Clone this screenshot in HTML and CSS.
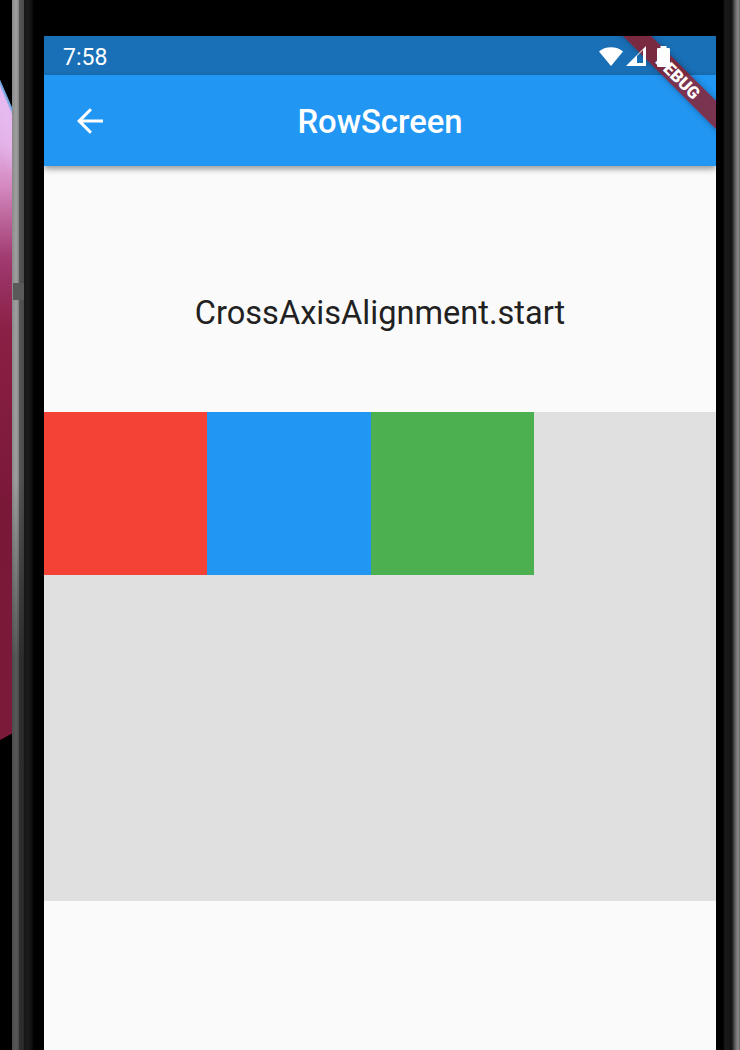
FILE: index.html
```html
<!DOCTYPE html>
<html lang="en">
<head>
    <meta charset="UTF-8">
    <title>RowScreen</title>
    <link rel="stylesheet" href="styles.css">
</head>
<body>
    <div class="wallpaper"></div>
    <div class="device">
        <div class="bezel-left">
            <div class="edge-left"></div>
            <div class="button-gap"></div>
        </div>
        <div class="screen">
            <div class="status-bar">
                <span class="time">7:58</span>
                <div class="status-icons">
                    <svg width="24" height="19" viewBox="0 0 24 19"><path d="M12 19 0 4.4C3 1.8 7.300.2 12 .2s9 1.600 12 4.200z" fill="#fff"/></svg>
                    <svg width="20" height="20" viewBox="0 0 20 20"><path d="M20 0V20H0zM17 4 11 10V17H17z" fill="#fff" fill-rule="evenodd"/></svg>
                    <svg class="icon-battery" width="13" height="21" viewBox="0 0 13 21"><path d="M3.500 0H9.500V2H11.800A1.200 1.200 0 0 1 13 3.200V19.800A1.200 1.200 0 0 1 11.800 21H1.200A1.200 1.200 0 0 1 0 19.800V3.200A1.200 1.200 0 0 1 1.200 2H3.500z" fill="#fff"/></svg>
                </div>
            </div>
            <div class="app-bar">
                <svg class="back-icon" width="32" height="32" viewBox="0 0 32 32"><path d="M29 14.400H8.900L18 5.300 15.800 3.200 3 16 15.800 28.800 18 26.700 8.900 17.600H29z" fill="#fff"/></svg>
                <h1>RowScreen</h1>
            </div>
            <div class="content">
                <p class="label">CrossAxisAlignment.start</p>
                <div class="row-demo">
                    <div class="box red"></div>
                    <div class="box blue"></div>
                    <div class="box green"></div>
                </div>
            </div>
            <div class="debug-ribbon">DEBUG</div>
        </div>
        <div class="bezel-right"></div>
    </div>
</body>
</html>
```

FILE: styles.css
```css
html, body {
    margin: 0;
    height: 100%;
    overflow: hidden;
}
body {
    background-color: #000;
    font-family: Roboto, "Liberation Sans", sans-serif;
    position: relative;
}
.wallpaper {
    position: absolute;
    left: 0;
    top: 80px;
    width: 13px;
    height: 660px;
    background:
        linear-gradient(247deg, #4f9fdc 12px, #e6baf0 15px, rgba(230,186,240,0) 40px),
        linear-gradient(180deg, #e6baf0 0, #e2aee4 10%, #d48ac0 16%, #a03a70 27%, #8a2045 38%, #7a1838 65%, #7c1a3a 100%);
    clip-path: polygon(0 0, 100% 30px, 100% 653px, 0 660px);
}
.device {
    position: relative;
    display: flex;
    width: 740px;
    height: 1050px;
}
.bezel-left {
    width: 44px;
    flex: none;
    background: linear-gradient(90deg, transparent 24px, #161616 24px, #1c1c1c 28px, #0e0e0e 32px, #000 34px);
    position: relative;
}
.edge-left {
    position: absolute;
    left: 12px;
    top: 0;
    bottom: 0;
    width: 12px;
    background:
        linear-gradient(180deg, rgba(0,0,0,0) 0, rgba(0,0,0,0) 480px, rgba(0,0,0,0.45) 660px),
        linear-gradient(90deg, #8a8a8a 0, #a0a0a0 35%, #858585 55%, #555 62%, #4a4a4a 100%);
}
.button-gap {
    position: absolute;
    left: 13px;
    top: 283px;
    width: 11px;
    height: 17px;
    background-color: #5a5a5a;
}
.bezel-right {
    flex: 1;
    background: linear-gradient(90deg, #000 0, #000 7px, #1a1a1a 9px, #141414 16px, #333 17px, #707070 20px, #8a8a8a 22px, #666 24px);
}
.screen {
    width: 672px;
    flex: none;
    margin-top: 36px;
    background-color: #fafafa;
    position: relative;
    overflow: hidden;
}
.status-bar {
    height: 39px;
    box-sizing: border-box;
    background-color: #1970b6;
    display: flex;
    align-items: center;
    justify-content: space-between;
    padding: 3px 46px 0 19px;
    color: #fff;
}
.time {
    font-size: 23px;
}
.status-icons {
    display: flex;
    align-items: center;
    gap: 3px;
    position: relative;
    z-index: 2;
    margin-top: -2px;
}
.icon-battery {
    margin-left: 8px;
}
.app-bar {
    height: 91px;
    box-sizing: border-box;
    padding-top: 3px;
    background-color: #2196f3;
    box-shadow: 0 3px 6px rgba(0,0,0,0.4);
    display: flex;
    align-items: center;
    justify-content: center;
    position: relative;
}
.app-bar h1 {
    margin: 0;
    color: #fff;
    font-size: 32.8px;
    font-weight: 500;
}
.back-icon {
    position: absolute;
    left: 30px;
    top: 30px;
}
.content {
    padding-top: 127px;
}
.label {
    margin: 0 0 79px;
    height: 40px;
    line-height: 40px;
    text-align: center;
    font-size: 32.6px;
    color: #212121;
}
.row-demo {
    display: flex;
    align-items: flex-start;
    height: 489px;
    background-color: #e0e0e0;
}
.box {
    width: 163.4px;
    height: 163px;
}
.red { background-color: #f44336; }
.blue { background-color: #2196f3; }
.green { background-color: #4caf50; }
.debug-ribbon {
    position: absolute;
    top: 31px;
    right: -57px;
    width: 190px;
    height: 20px;
    background-color: rgba(154,19,25,0.75);
    box-shadow: 0 0 6px rgba(0,0,0,0.3);
    transform: rotate(45deg);
    text-align: center;
    color: #fff;
    font-size: 17px;
    font-weight: 900;
    line-height: 20px;
}
```
